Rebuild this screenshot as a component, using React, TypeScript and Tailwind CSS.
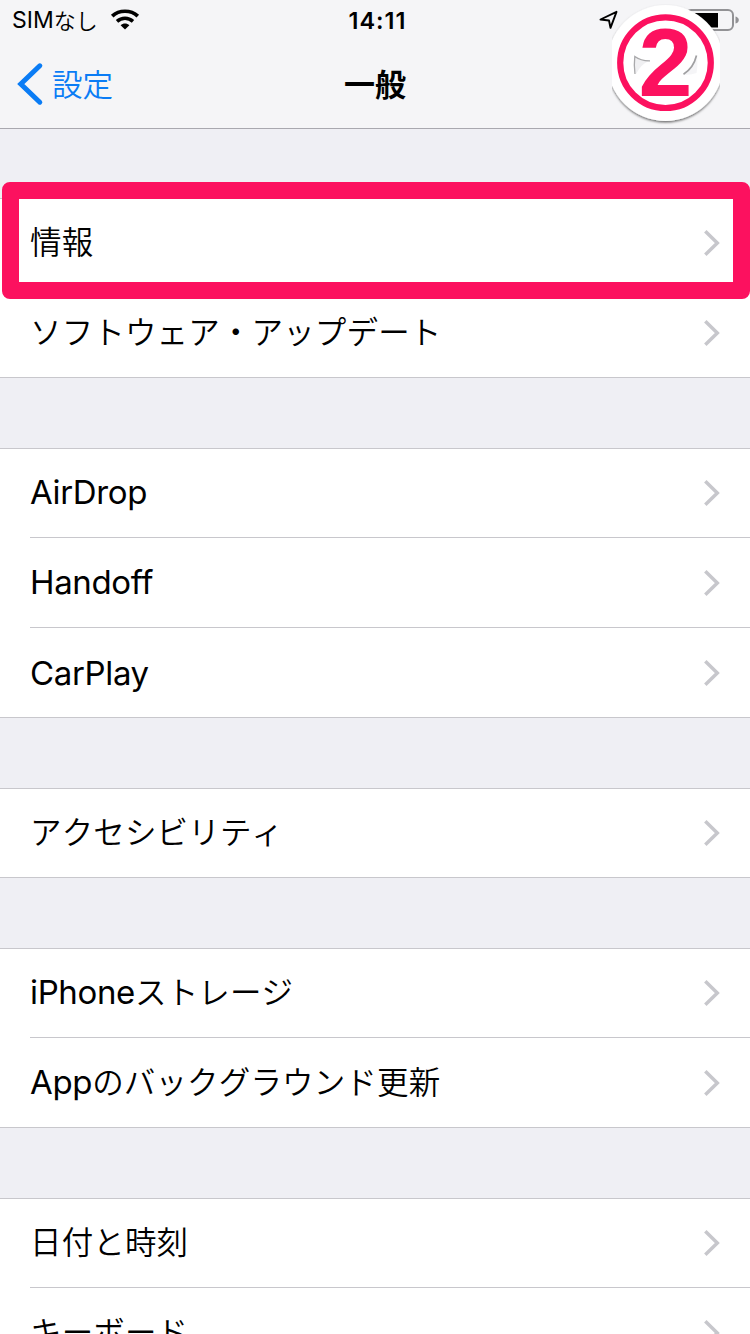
import { Fragment } from 'react';

type Row = { label: string; highlighted?: boolean };

const groups: Row[][] = [
  [{ label: '情報', highlighted: true }, { label: 'ソフトウェア・アップデート' }],
  [{ label: 'AirDrop' }, { label: 'Handoff' }, { label: 'CarPlay' }],
  [{ label: 'アクセシビリティ' }],
  [{ label: 'iPhoneストレージ' }, { label: 'Appのバックグラウンド更新' }],
  [{ label: '日付と時刻' }, { label: 'キーボード' }]
];

// Latin runs are set slightly larger than the Japanese ones.
function Label({ text }: { text: string }) {
  const parts = text.split(/([A-Za-z]+)/).filter(Boolean);
  return (
    <span className="flex items-baseline whitespace-nowrap leading-none">
      {parts.map((part) => (
        <Fragment key={part}>
          {/[A-Za-z]/.test(part) ? (
            <span className="font-['Inter','Liberation_Sans',sans-serif] text-[33px] tracking-[-0.35px]">
              {part}
            </span>
          ) : (
            <span className="pb-1 text-[31.5px] font-[350] tracking-[0.15px] [font-kerning:none]">
              {part}
            </span>
          )}
        </Fragment>
      ))}
    </span>
  );
}

function Chevron() {
  return (
    <svg width="18" height="28" viewBox="0 0 18 28" fill="none" className="shrink-0">
      <path d="M2.3 2.3 L14.3 14 L2.3 25.7" stroke="#c7c7cc" strokeWidth="3.5" />
    </svg>
  );
}

function WifiIcon() {
  return (
    <svg width="30" height="22" viewBox="0 0 30 22" fill="none">
      <path d="M2.2 7.2 C9.2 0.6 20.8 0.6 27.8 7.2" stroke="#000" strokeWidth="3.7" />
      <path d="M7 12.4 C11.6 8.2 18.4 8.2 23 12.4" stroke="#000" strokeWidth="3.5" />
      <path d="M10.6 16.2 C13.2 13.9 16.8 13.9 19.4 16.2 L15 20.6 Z" fill="#000" />
    </svg>
  );
}

function StatusBar() {
  return (
    <div className="grid h-10 grid-cols-3 items-center pl-3 pr-[11px]">
      <div className="flex items-center">
        <span className="pt-px font-['Inter','Liberation_Sans',sans-serif] text-[23px] leading-none">SIM</span>
        <span className="pb-[3px] text-[22px] leading-none font-[350] [font-kerning:none]">なし</span>
        <span className="ml-3">
          <WifiIcon />
        </span>
      </div>
      <span className="ml-1 pt-px text-center font-['Inter','Liberation_Sans',sans-serif] text-[23.5px] leading-none font-semibold tracking-[1px]">
        14:11
      </span>
      <div className="flex items-center justify-end gap-[66px]">
        <svg width="20" height="20" viewBox="0 0 20 20" fill="none">
          <path
            d="M1.5 9.5 L17.5 1.8 L11.5 17.8 L10 10.5 Z"
            stroke="#000"
            strokeWidth="1.9"
            strokeLinejoin="round"
          />
        </svg>
        <svg width="54" height="24" viewBox="0 0 54 24" fill="none">
          <rect x="1" y="2" width="47" height="20" rx="5" stroke="#929295" strokeWidth="2" />
          <rect x="4" y="5" width="29" height="14.5" fill="#000" />
          <path d="M50.5 8.5 Q53.8 9.5 53.8 12 Q53.8 14.5 50.5 15.5 Z" fill="#929295" />
        </svg>
      </div>
    </div>
  );
}

function StepBadge() {
  return (
    <svg
      width="120"
      height="128"
      viewBox="0 0 120 128"
      className="absolute top-0 left-[606px]"
    >
      <defs>
        <clipPath id="badge-bounds">
          <rect x="6" y="0" width="108" height="128" />
        </clipPath>
        <filter id="badge-shadow" x="-10%" y="-10%" width="120%" height="120%">
          <feDropShadow dx="0" dy="1.5" stdDeviation="1" floodColor="#000" floodOpacity="0.55" />
        </filter>
      </defs>
      <g clipPath="url(#badge-bounds)">
        <circle cx="59.5" cy="63" r="58" fill="#fff" filter="url(#badge-shadow)" />
      </g>
      <path d="M29 56 Q35 60.5 44 60.5 Q35 64 30 74 Q27.5 65 29 56 Z" fill="#f0f0f2" />
      <path d="M29 74 Q27.8 64 28.8 56.5 Q35 61 44 60.8" fill="none" stroke="#a9a9ab" strokeWidth="1.3" />
      <path d="M91 55 Q92 66 90.5 73 Q84 75.5 77.5 74.5 Q88 67 91 55 Z" fill="#f5f5f7" />
      <path d="M90.5 55.5 Q87.5 68 77.5 74.2" fill="none" stroke="#a0a0a2" strokeWidth="1.7" />
      <circle cx="59.5" cy="62.7" r="45.3" fill="none" stroke="#fc115f" strokeWidth="6.2" />
      <text
        x="59.5"
        y="96.3"
        textAnchor="middle"
        fill="#fc115f"
        className="font-['Liberation_Sans',sans-serif] text-[97px] font-bold"
      >
        2
      </text>
    </svg>
  );
}

function NavBar() {
  return (
    <div className="grid h-[88px] grid-cols-3 items-center px-4">
      <div className="flex items-center gap-2 text-[#0a7cf5]">
        <svg width="28" height="44" viewBox="0 0 28 44" fill="none">
          <path
            d="M23.8 3.8 L4.8 22 L23.8 40.2"
            stroke="currentColor"
            strokeWidth="5"
            strokeLinecap="round"
          />
        </svg>
        <span className="pb-px text-[30.5px] leading-none font-[350]">設定</span>
      </div>
      <h1 className="pb-1 text-center text-[31px] leading-none font-bold">一般</h1>
    </div>
  );
}

function SettingsRow({ row, last }: { row: Row; last: boolean }) {
  return (
    <li className="relative h-[90px] pl-[30px]">
      <div className={`flex h-full items-center justify-between pr-[29px] ${last ? '' : 'border-b border-[#c8c7cc]'}`}>
        <Label text={row.label} />
        <Chevron />
      </div>
      {row.highlighted && (
        <div className="absolute top-[-16px] right-[0.5px] left-[2.4px] z-10 h-[117px] rounded-lg border-[17px] border-[#fc115f]" />
      )}
    </li>
  );
}

export default function App() {
  return (
    <div className="h-[1334px] w-[750px] overflow-hidden bg-[#efeff4] font-['Noto_Sans_CJK_JP',sans-serif] text-black">
      <header className="relative h-[129px] border-b border-[#a9a8af] bg-[#f5f5f7]">
        <StatusBar />
        <NavBar />
        <StepBadge />
      </header>

      <main className="flex flex-col gap-[70px] pt-[69px]">
        {groups.map((rows) => (
          <ul
            key={rows[0].label}
            className="bg-white shadow-[inset_0_1px_0_#c8c7cc,inset_0_-1px_0_#c8c7cc]"
          >
            {rows.map((row, i) => (
              <SettingsRow key={row.label} row={row} last={i === rows.length - 1} />
            ))}
          </ul>
        ))}
      </main>
    </div>
  );
}
